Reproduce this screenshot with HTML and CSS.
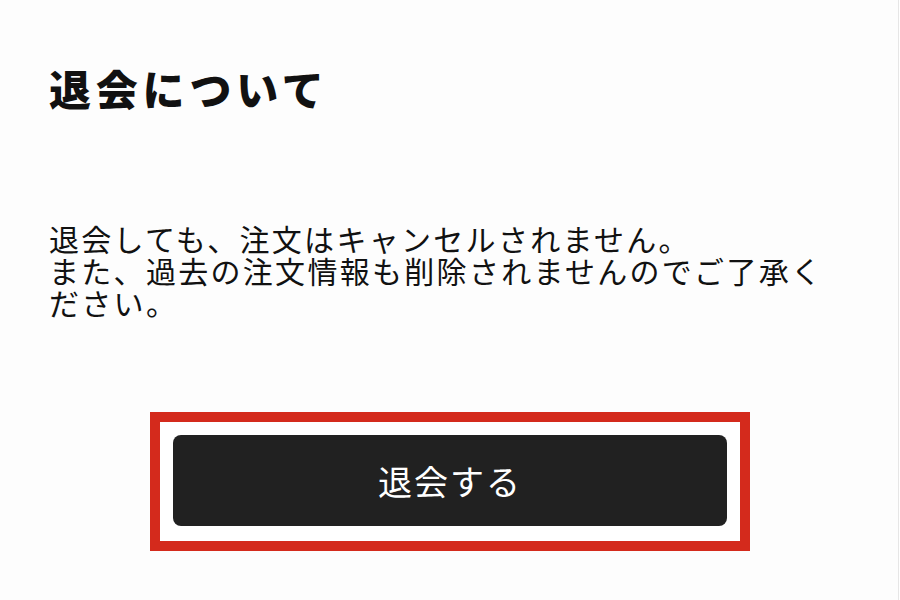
FILE: index.html
```html
<!DOCTYPE html>
<html lang="ja">
<head>
<meta charset="utf-8">
<link rel="stylesheet" href="styles.css">
</head>
<body>
<div class="page">
  <h1 class="title">退会について</h1>
  <p class="notice">退会しても、注文はキャンセルされません。<br>また、過去の注文情報も削除されませんのでご了承ください。</p>
  <div class="highlight">
    <button class="withdraw" type="button">退会する</button>
  </div>
</div>
</body>
</html>
```
FILE: styles.css
```css
html, body {
  margin: 0;
  padding: 0;
  background: #ffffff;
}
.page {
  width: 899px;
  height: 600px;
  box-sizing: border-box;
  border-right: 1px solid #e6e6e6;
  background: #fdfdfd;
  padding: 0 60px 0 49px;
  font-family: "Noto Sans CJK JP", "Noto Sans", sans-serif;
  color: #111111;
  overflow: hidden;
}
.title {
  margin: 0;
  padding-top: 67px;
  font-size: 42px;
  line-height: 42px;
  font-weight: 900;
  letter-spacing: 4.8px;
}
.notice {
  margin: 113px 0 0 0;
  font-size: 30px;
  line-height: 32px;
  letter-spacing: 2.3px;
  font-weight: 400;
}
.highlight {
  margin: 94px 0 0 101px;
  width: 600px;
  height: 139px;
  box-sizing: border-box;
  border: 10px solid #d42a1c;
  padding: 13px 13px 15px 13px;
  background: #ffffff;
}
.withdraw {
  display: flex;
  align-items: center;
  justify-content: center;
  width: 100%;
  height: 91px;
  border: none;
  border-radius: 8px;
  background: #212121;
  color: #ffffff;
  font-family: "Noto Sans CJK JP", "Noto Sans", sans-serif;
  font-size: 34px;
  letter-spacing: 2px;
  padding: 0;
}
```
